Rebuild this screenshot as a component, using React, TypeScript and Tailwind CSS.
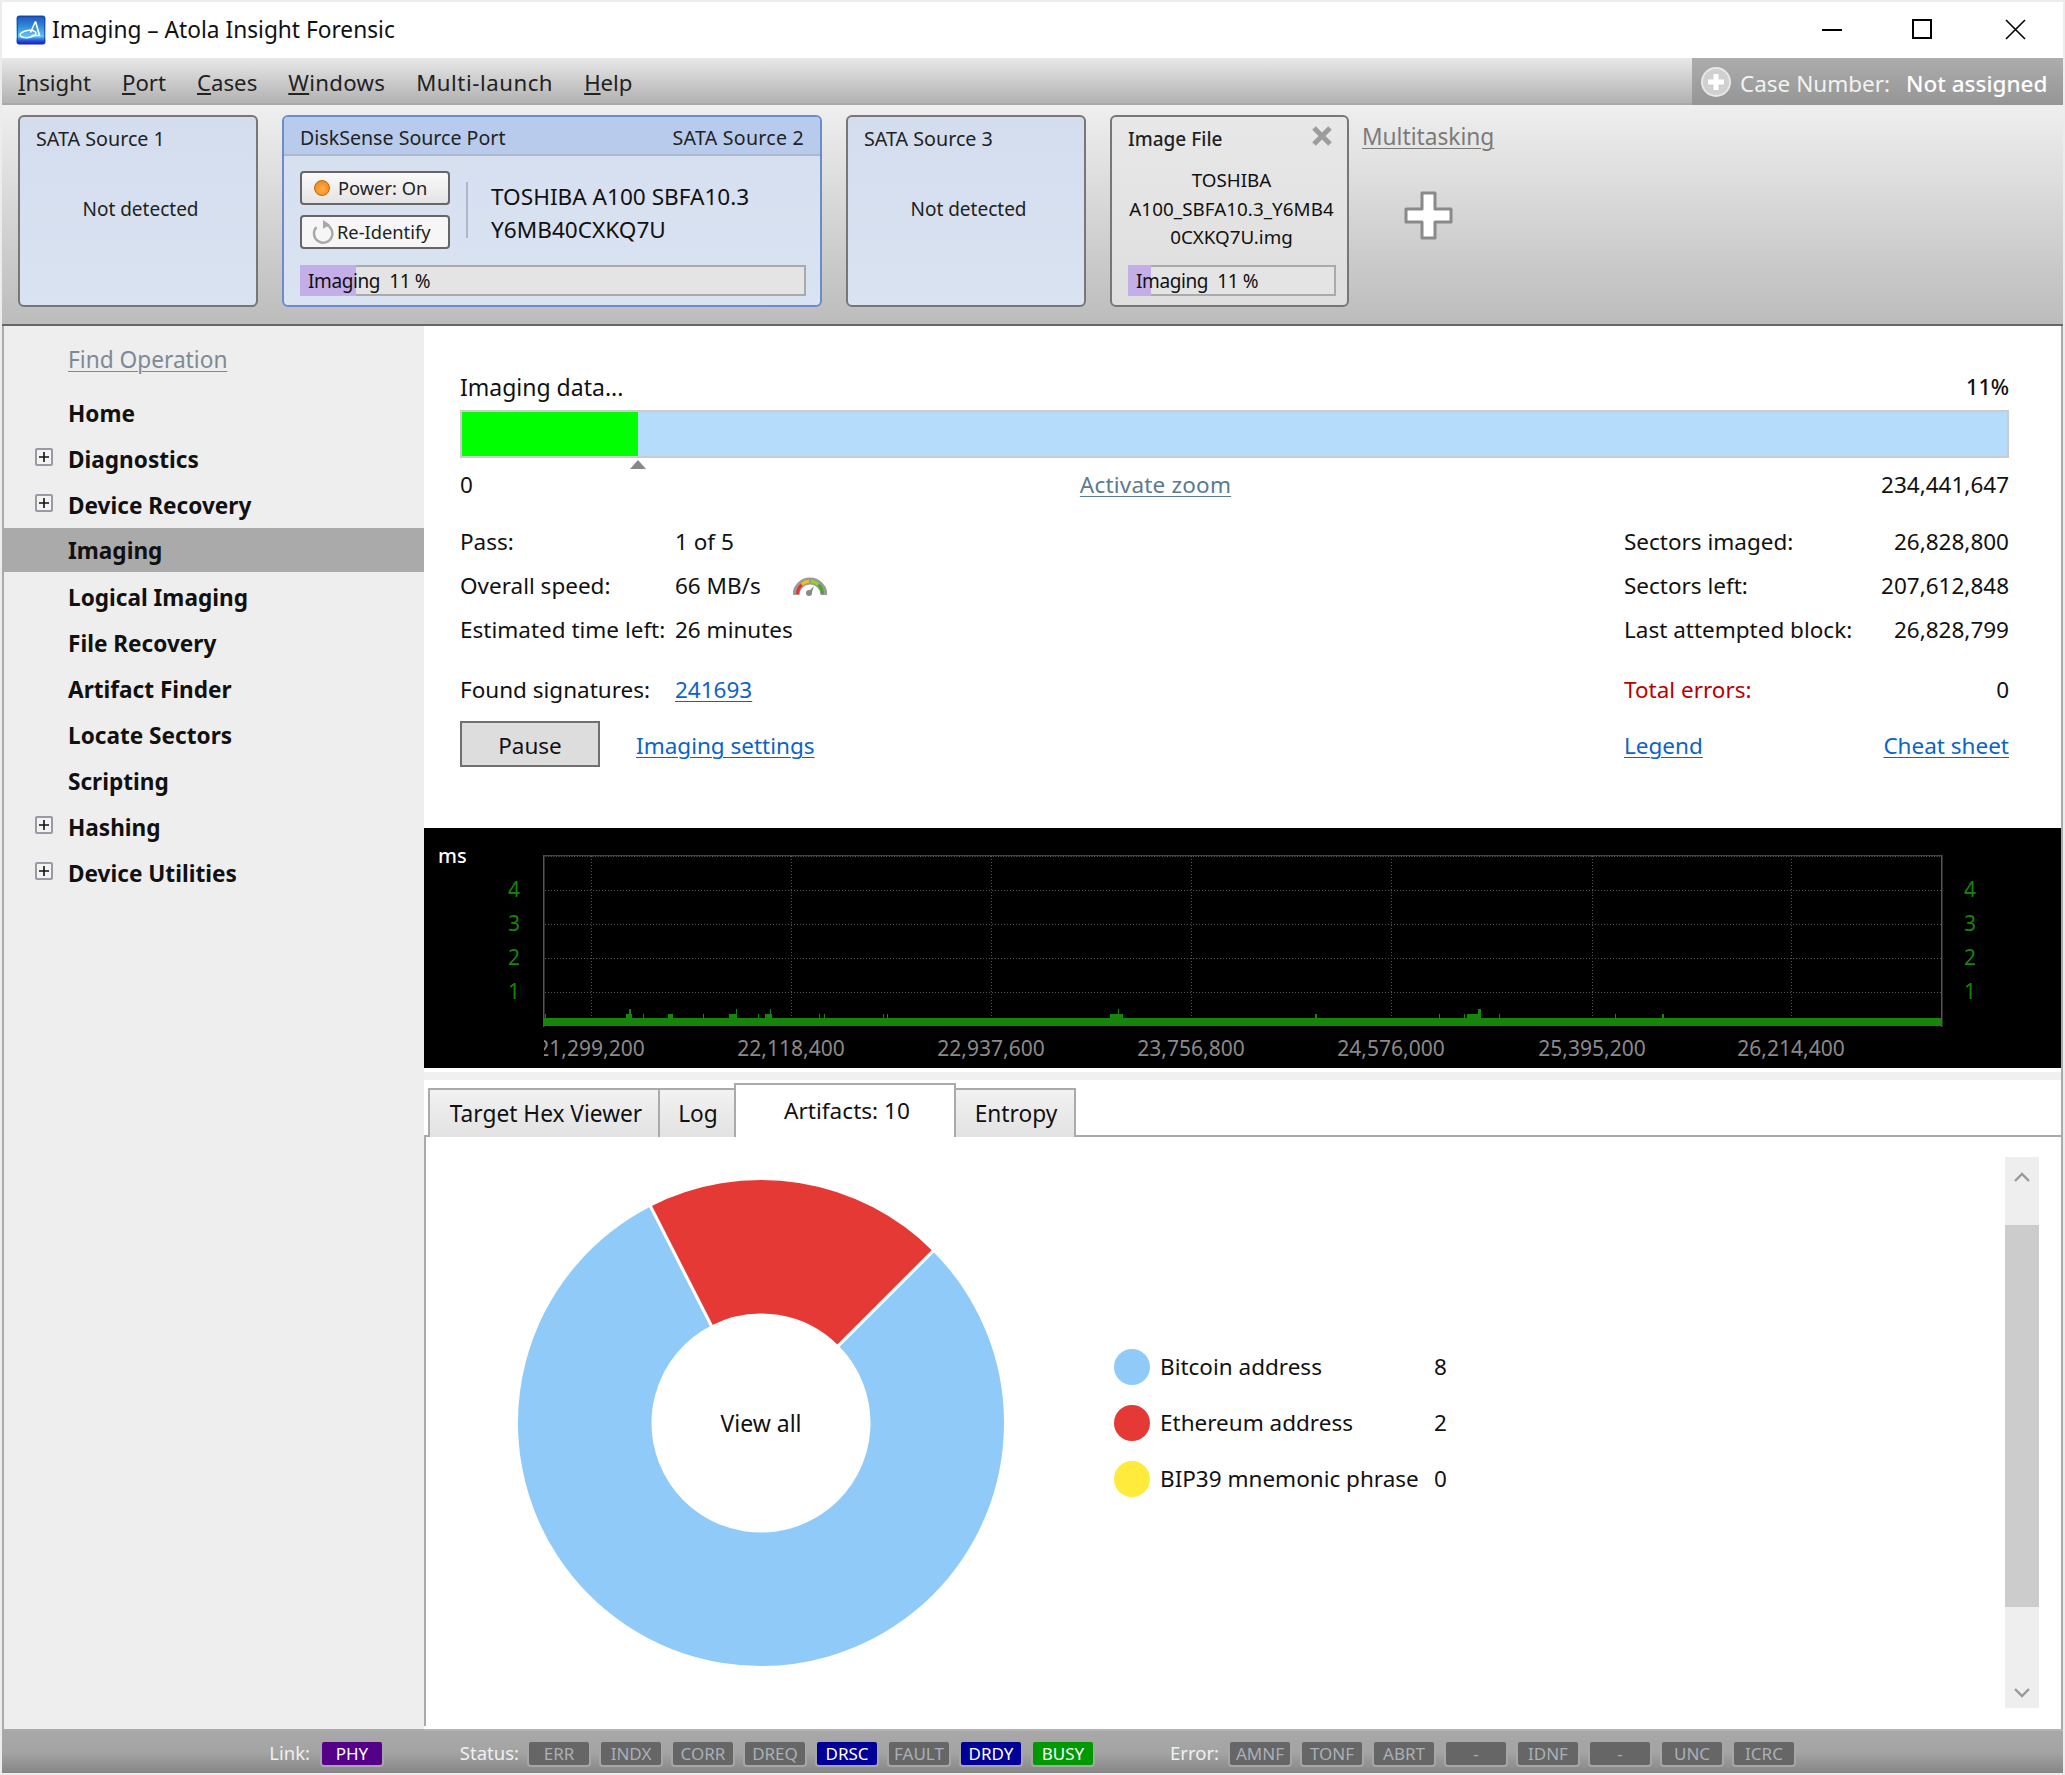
import React from "react";

const Plus = () => (
  <span className="w-[18px] h-[18px] shrink-0 rounded-[2px] border-2 border-[#9a9aa6] bg-[#f4f4f4] flex items-center justify-center">
    <svg width="10" height="10" viewBox="0 0 10 10"><path d="M5 0v10M0 5h10" stroke="#111" strokeWidth="1.6" /></svg>
  </span>
);

const Logo = () => (
  <svg width="30" height="30" viewBox="0 0 30 30" className="shrink-0">
    <defs>
      <linearGradient id="lg" x1="0" y1="0" x2="0" y2="1">
        <stop offset="0" stopColor="#1a55b8" />
        <stop offset="0.35" stopColor="#2f86d8" />
        <stop offset="0.72" stopColor="#5cc4f4" />
        <stop offset="0.85" stopColor="#2b5fe0" />
        <stop offset="1" stopColor="#1212b4" />
      </linearGradient>
    </defs>
    <rect x="0.5" y="0.5" width="29" height="29" rx="3" fill="url(#lg)" />
    <rect x="1.5" y="1.5" width="27" height="27" rx="2.5" fill="none" stroke="#123aa8" strokeOpacity="0.7" />
    <ellipse cx="12" cy="19" rx="8" ry="3.6" fill="none" stroke="#fff" strokeWidth="1.5" transform="rotate(-8 12 19)" />
    <path d="M19.5 6.5L14.5 17.5M19.5 6.5L23.5 20.5H15.5" fill="none" stroke="#fff" strokeWidth="1.6" />
  </svg>
);

const Progress = ({ fill, w }: { fill: number; w: string }) => (
  <div className={`relative h-[31px] ${w} border-2 border-[#aaaaaa] bg-[#e4e4e4] mt-auto`}>
    <div className="absolute -left-[2px] -top-[2px] -bottom-[2px] bg-[#c3aee8]" style={{ width: fill }} />
    <div className="relative pl-[6px] leading-[28px] text-[19px] tracking-[-0.4px] text-[#111] whitespace-pre">Imaging  11 %</div>
  </div>
);

const EmptyCard = ({ title }: { title: string }) => (
  <div className="w-[240px] h-[192px] shrink-0 rounded-[6px] border-2 border-[#777777] bg-gradient-to-b from-[#d3ddee] to-[#dae3f1] flex flex-col pl-[16px] pr-[15px] pt-[8px] text-[19px] text-[#222]">
    <div className="leading-[28px] whitespace-nowrap text-[19.7px]">{title}</div>
    <div className="mt-[42px] leading-[28px] text-center whitespace-nowrap pl-[4px]">Not detected</div>
  </div>
);

const Chip = ({ t, c }: { t: string; c?: string }) => (
  <div
    className={`w-[64px] h-[27px] rounded-[4px] border-2 border-[#a6a6a6] flex items-center justify-center text-[17px] leading-none ${
      c === "blue" ? "bg-[#000099] text-white" : c === "purple" ? "bg-[#550088] text-white" : c === "green" ? "bg-[#009900] text-white" : "bg-[#666666] text-[#aab0b6]"
    }`}
  >
    {t}
  </div>
);

const ticks: [number, string][] = [
  [167, "21,299,200"],
  [367, "22,118,400"],
  [567, "22,937,600"],
  [767, "23,756,800"],
  [967, "24,576,000"],
  [1168, "25,395,200"],
  [1367, "26,214,400"],
];

const low: [number, number][] = [
  [121, 1], [202, 6], [219, 1], [244, 5], [279, 1], [305, 8], [334, 1], [341, 7], [395, 1], [400, 1], [459, 1], [463, 1],
  [686, 13], [891, 2], [1015, 1], [1040, 1], [1043, 11], [1075, 1], [1191, 1], [1238, 2],
];
const tall: [number, number][] = [[205, 2], [312, 1], [346, 1], [694, 1], [1054, 3]];

const Chart = () => (
  <svg width="1637" height="240" viewBox="0 0 1637 240" className="block bg-black">
    <defs>
      <clipPath id="cl"><rect x="120" y="0" width="1400" height="240" /></clipPath>
    </defs>
    <text x="14" y="35" fill="#fff" fontSize="20" fontWeight="500">ms</text>
    {[62.5, 96.5, 130.5, 164.5].map((y) => (
      <line key={y} x1="121" x2="1517" y1={y} y2={y} stroke="#555" strokeDasharray="1 2" />
    ))}
    <line x1="119" x2="1518" y1="27.5" y2="27.5" stroke="#444" />
    <line x1="119" x2="1518" y1="28.5" y2="28.5" stroke="#666" strokeDasharray="1 1.6" />
    {ticks.map(([x]) => (
      <line key={x} x1={x + 0.5} x2={x + 0.5} y1="28" y2="198" stroke="#555" strokeDasharray="1 2" />
    ))}
    <rect x="119" y="27" width="1.5" height="172" fill="#555" />
    <rect x="1517" y="27" width="1.5" height="172" fill="#555" />
    <rect x="120" y="190" width="1398" height="8" fill="#17850b" />
    {low.map(([x, w]) => (
      <rect key={x} x={x} y="186" width={w} height="4" fill="#17850b" />
    ))}
    {tall.map(([x, w]) => (
      <rect key={x} x={x} y="181" width={w} height="9" fill="#17850b" />
    ))}
    {[["4", 69], ["3", 103], ["2", 137], ["1", 171]].map(([t, y]) => (
      <React.Fragment key={t as string}>
        <text x="90" y={y as number} textAnchor="middle" fill="#17850b" fontSize="21">{t}</text>
        <text x="1546" y={y as number} textAnchor="middle" fill="#17850b" fontSize="21">{t}</text>
      </React.Fragment>
    ))}
    <g clipPath="url(#cl)">
      {ticks.map(([x, t]) => (
        <text key={t} x={x} y="228" textAnchor="middle" fill="#8a8a8a" fontSize="21">{t}</text>
      ))}
    </g>
  </svg>
);

const pt = (r: number, deg: number) => {
  const a = ((deg - 90) * Math.PI) / 180;
  return `${250 + r * Math.cos(a)} ${250 + r * Math.sin(a)}`;
};
const seg = (a: number, b: number) => {
  const large = b - a > 180 ? 1 : 0;
  return `M${pt(244.5, a)} A244.5 244.5 0 ${large} 1 ${pt(244.5, b)} L${pt(108, b)} A108 108 0 ${large} 0 ${pt(108, a)} Z`;
};

const Pie = () => (
  <svg width="500" height="500" viewBox="0 0 500 500" className="shrink-0">
    <path d={seg(45, 333)} fill="#90caf9" stroke="#fff" strokeWidth="3" />
    <path d={seg(-27, 45)} fill="#e53935" stroke="#fff" strokeWidth="3" />
    <text x="250" y="259" textAnchor="middle" fontSize="23" fill="#111">View all</text>
  </svg>
);

const Stat = ({ l, v }: { l: string; v: string }) => (
  <div className="h-[44px] flex items-center justify-between">
    <span>{l}</span>
    <span>{v}</span>
  </div>
);

const tabCls = "h-[49px] flex items-center justify-center border-2 border-[#aaaaaa] border-b-0 bg-gradient-to-b from-[#f2f2f2] to-[#e2e2e2] text-[22.7px] text-[#111] whitespace-nowrap pt-[2px]";

export default function App() {
  return (
    <div className="w-[2065px] h-[1775px] bg-[#ececec] p-[2px] overflow-hidden text-[22.5px] text-[#111] font-['Noto_Sans','Open_Sans',sans-serif]">
      <div className="w-[2061px] h-[1771px] flex flex-col bg-white">
        {/* Title bar */}
        <div className="h-[56px] shrink-0 bg-white flex items-center pl-[14px]">
          <Logo />
          <span className="ml-[6px] text-[22.7px] whitespace-nowrap">Imaging – Atola Insight Forensic</span>
          <svg width="224" height="24" viewBox="0 0 224 24" className="ml-auto mr-[36px] -mt-[2px]" fill="none" stroke="#000">
            <path d="M19 13h20" strokeWidth="2" />
            <rect x="110" y="3" width="18" height="18" strokeWidth="2" />
            <path d="M203 3l19 19M222 3l-19 19" strokeWidth="1.6" />
          </svg>
        </div>
        {/* Menu */}
        <div className="h-[47px] shrink-0 flex bg-gradient-to-b from-[#e8e8e8] to-[#b2b2b2] border-b-2 border-[#a8a8a8]">
          <div className="flex items-center gap-[31px] pl-[16px] pt-[5px] text-[22.2px] text-[#222]">
            <span><u>I</u>nsight</span>
            <span><u>P</u>ort</span>
            <span><u>C</u>ases</span>
            <span className="tracking-[0.3px]"><u>W</u>indows</span>
            <span className="tracking-[0.55px]">Multi-launch</span>
            <span><u>H</u>elp</span>
          </div>
          <div className="ml-auto w-[371px] -mb-[2px] bg-gradient-to-b from-[#adadad] to-[#959595] flex items-center pl-[9px] text-[22.5px] text-[#f2f2f2] whitespace-nowrap">
            <svg width="30" height="30" viewBox="0 0 30 30" className="shrink-0">
              <circle cx="15" cy="15" r="14" fill="#d0d0d0" stroke="#e8e8e8" strokeWidth="2" />
              <path d="M15 7v16M7 15h16" stroke="#fff" strokeWidth="5" />
            </svg>
            <span className="ml-[9px] pt-[4px]">Case Number:</span>
            <span className="ml-[16px] pt-[4px] text-white font-medium">Not assigned</span>
          </div>
        </div>
        {/* Toolbar */}
        <div className="h-[221px] shrink-0 flex items-start pl-[16px] pt-[10px] gap-[24px] bg-gradient-to-b from-[#efefef] to-[#bcbcbc] border-b-2 border-[#666666]">
          <EmptyCard title="SATA Source 1" />
          <div className="w-[540px] h-[192px] shrink-0 rounded-[6px] border-2 border-[#6a8ccc] bg-gradient-to-b from-[#d5dfef] to-[#dae3f2] flex flex-col text-[#222] overflow-hidden">
            <div className="h-[39px] shrink-0 bg-[#b8cbed] border-b-2 border-[#adb9cf] flex items-center justify-between pl-[16px] pr-[16px] text-[19.6px] pt-[4px]">
              <span>DiskSense Source Port</span>
              <span className="tracking-[0.25px]">SATA Source 2</span>
            </div>
            <div className="flex flex-1 flex-col pl-[16px] pr-[13px] pt-[15px] pb-[9px]">
              <div className="flex">
                <div className="flex flex-col gap-[10px] text-[18.3px] text-[#222]">
                  <div className="w-[150px] h-[34px] rounded-[4px] border-2 border-[#666] bg-gradient-to-b from-[#fafafa] to-[#e4e4e4] flex items-center pl-[12px]">
                    <span className="w-[16px] h-[16px] rounded-full border border-[#c06a00] bg-[radial-gradient(circle_at_50%_60%,#ffb050,#f07a10)]" />
                    <span className="ml-[8px]">Power: On</span>
                  </div>
                  <div className="w-[150px] h-[34px] rounded-[4px] border-2 border-[#666] bg-[#f6f6f6] flex items-center pl-[9px]">
                    <svg width="24" height="26" viewBox="0 0 22 24" fill="none" className="shrink-0">
                      <path d="M13.5 5.2A8.5 8.5 0 1 1 5 7.5" stroke="#a8a8a8" strokeWidth="2.2" />
                      <path d="M11 1l6.5 4.2L11 9z" fill="#a8a8a8" />
                    </svg>
                    <span className="ml-[2px]">Re-Identify</span>
                  </div>
                </div>
                <div className="ml-[16px] mt-[11px] w-[2px] h-[56px] bg-[#aeb8cc]" />
                <div className="ml-[23px] mt-[10px] text-[22.6px] leading-[32.5px] text-[#111]">
                  <div>TOSHIBA A100 SBFA10.3</div>
                  <div>Y6MB40CXKQ7U</div>
                </div>
              </div>
              <Progress fill={56} w="w-[506px]" />
            </div>
          </div>
          <EmptyCard title="SATA Source 3" />
          <div className="w-[239px] h-[192px] shrink-0 rounded-[6px] border-2 border-[#777777] bg-gradient-to-b from-[#e8e8e8] to-[#dedede] flex flex-col pl-[16px] pr-[15px] pt-[8px] pb-[9px] text-[#222] relative">
            <div className="leading-[28px] text-[19px] font-medium">Image File</div>
            <svg width="22" height="20" viewBox="0 0 22 20" className="absolute right-[14px] top-[9px]">
              <path d="M3 2l16 16M19 2L3 18" stroke="#9c9c9c" strokeWidth="5" />
            </svg>
            <div className="mt-[13px] text-center text-[18.8px] leading-[28.5px] -ml-[10px] -mr-[13px] text-[#111]">
              <div>TOSHIBA</div>
              <div className="tracking-[0.05px] whitespace-nowrap">A100_SBFA10.3_Y6MB4</div>
              <div>0CXKQ7U.img</div>
            </div>
            <Progress fill={23} w="w-[208px]" />
          </div>
          <div className="-ml-[11px] flex flex-col items-start">
            <span className="text-[22.7px] leading-[32px] underline decoration-1 underline-offset-[3px] text-[#7a7a7a] mt-[6px]">Multitasking</span>
            <svg width="50" height="50" viewBox="0 0 50 50" className="ml-[42px] mt-[38px]">
              <path d="M18 2h13v16h16v13H31v16H18V31H2V18h16z" fill="#fff" stroke="#8a8a8a" strokeWidth="3" strokeLinejoin="round" />
            </svg>
          </div>
        </div>
        {/* Body */}
        <div className="flex h-[1403px] shrink-0">
          <aside className="w-[422px] shrink-0 bg-[#eeeeee] border-l-2 border-b-2 border-[#aaaaaa] flex flex-col -mb-[2px] relative z-10">
            <div className="h-[46px] mt-[11px] flex items-center pl-[64px] text-[#7d8a96] underline decoration-1 underline-offset-[3px] text-[22.7px]">Find Operation</div>
            <div className="mt-[8px] flex flex-col font-bold text-[22.6px] text-[#111]">
              {[
                ["Home", 0], ["Diagnostics", 1], ["Device Recovery", 1], ["Imaging", 2], ["Logical Imaging", 0], ["File Recovery", 0],
                ["Artifact Finder", 0], ["Locate Sectors", 0], ["Scripting", 0], ["Hashing", 1], ["Device Utilities", 1],
              ].map(([t, k]) => (
                <div key={t as string} className={`relative flex items-center pl-[64px] ${k === 2 ? "h-[44px] -mt-[1px] mb-[3px] pt-[2px] bg-[#aaaaaa]" : "h-[46px]"}`}>
                  {k === 1 && (
                    <span className="absolute left-[31px] top-[11px]"><Plus /></span>
                  )}
                  {t}
                </div>
              ))}
            </div>
          </aside>
          <main className="w-[1639px] shrink-0 border-r-2 border-[#aaaaaa] flex flex-col bg-white">
            <section className="h-[502px] shrink-0 pl-[36px] pr-[52px] pt-[45px]">
              <div className="h-[32px] flex items-center justify-between">
                <span className="text-[23px]">Imaging data...</span>
                <span className="font-medium text-[21.5px]">11%</span>
              </div>
              <div className="mt-[7px] h-[48px] flex border-2 border-[#cccccc] bg-[#b6dcfb]">
                <div className="w-[176px] bg-[#00ff00]" />
              </div>
              <div className="relative h-[54px] flex items-center justify-between">
                <svg width="16" height="9" viewBox="0 0 16 9" className="absolute left-[170px] top-[2px]"><path d="M8 0l8 9H0z" fill="#888" /></svg>
                <span>0</span>
                <span className="text-[#5a7a90] underline decoration-1 underline-offset-[3px] mr-[43px] tracking-[0.2px]">Activate zoom</span>
                <span>234,441,647</span>
              </div>
              <div className="mt-[8px] flex justify-between">
                <div className="w-[640px]">
                  <div className="h-[44px] flex items-center"><span className="w-[215px]">Pass:</span><span>1 of 5</span></div>
                  <div className="h-[44px] flex items-center">
                    <span className="w-[215px]">Overall speed:</span><span>66 MB/s</span>
                    <svg width="34" height="20" viewBox="0 0 34 20" className="ml-[32px]" fill="none">
                      <path d="M3 19a14 14 0 0 1 28 0" stroke="#9a9a9a" strokeWidth="7" />
                      <path d="M4.5 18a12.5 12.5 0 0 1 4-9.2" stroke="#e8322a" strokeWidth="3" />
                      <path d="M9 8.3a12.5 12.5 0 0 1 7-3" stroke="#f2c21a" strokeWidth="3" />
                      <path d="M18 5.3a12.5 12.5 0 0 1 7 3" stroke="#9ad21e" strokeWidth="3" />
                      <path d="M25.5 8.8a12.5 12.5 0 0 1 4 9.2" stroke="#3cb01e" strokeWidth="3" />
                      <path d="M21 10l-3 9-4-2z" fill="#8a8a8a" />
                      <circle cx="16" cy="17" r="3" fill="#8a8a8a" />
                    </svg>
                  </div>
                  <div className="h-[44px] flex items-center"><span className="w-[215px] whitespace-nowrap">Estimated time left:</span><span>26 minutes</span></div>
                  <div className="h-[44px] mt-[16px] flex items-center"><span className="w-[215px]">Found signatures:</span><span className="text-[#0a64c8] underline decoration-1 underline-offset-[3px]">241693</span></div>
                </div>
                <div className="w-[385px]">
                  <Stat l="Sectors imaged:" v="26,828,800" />
                  <Stat l="Sectors left:" v="207,612,848" />
                  <Stat l="Last attempted block:" v="26,828,799" />
                  <div className="h-[44px] mt-[16px] flex items-center justify-between"><span className="text-[#b80000]">Total errors:</span><span>0</span></div>
                </div>
              </div>
              <div className="mt-[9px] flex items-center">
                <div className="w-[140px] h-[46px] border-2 border-[#707070] bg-[#dddddd] flex items-center justify-center pt-[3px]">Pause</div>
                <span className="ml-[36px] pt-[3px] text-[#0a64c8] underline decoration-1 underline-offset-[3px]">Imaging settings</span>
                <span className="ml-auto pt-[3px] w-[385px] flex justify-between text-[#0a64c8] underline decoration-1 underline-offset-[3px]">
                  <span>Legend</span>
                  <span>Cheat sheet</span>
                </span>
              </div>
            </section>
            <Chart />
            <div className="h-[4px] shrink-0 bg-white" />
            <div className="h-[8px] shrink-0 bg-[#f0f0f0]" />
            {/* Tabs */}
            <div className="h-[57px] shrink-0 pl-[4px] flex items-end relative z-10 -mb-[2px]">
              <div className={`${tabCls} w-[232px] pl-[4px]`}>Target Hex Viewer</div>
              <div className={`${tabCls} w-[78px] -ml-[2px] pl-[2px]`}>Log</div>
              <div className="w-[222px] -ml-[2px] h-[54px] pl-[4px] flex items-center justify-center border-2 border-b-0 border-[#aaaaaa] bg-white text-[22.6px] text-[#111] whitespace-nowrap">Artifacts: 10</div>
              <div className={`${tabCls} w-[122px] -ml-[2px] pl-[2px]`}>Entropy</div>
            </div>
            {/* Panel */}
            <div className="h-[591px] shrink-0 border-l-2 border-t-2 border-[#aaaaaa] flex items-start">
              <div className="flex items-center pl-[85px] pt-[36px]">
                <Pie />
                <div className="ml-[103px] flex flex-col gap-[20px]">
                  {[
                    ["Bitcoin address", "8", "bg-[#90caf9]"],
                    ["Ethereum address", "2", "bg-[#e53935]"],
                    ["BIP39 mnemonic phrase", "0", "bg-[#ffeb3b]"],
                  ].map(([t, n, c]) => (
                    <div key={t} className="h-[36px] flex items-center">
                      <span className={`w-[36px] h-[36px] rounded-full ${c}`} />
                      <span className="ml-[10px] w-[274px] whitespace-nowrap">{t}</span>
                      <span>{n}</span>
                    </div>
                  ))}
                </div>
              </div>
              <div className="ml-auto mr-[22px] mt-[20px] w-[34px] h-[551px] bg-[#eeeeee] flex flex-col">
                <div className="h-[68px] shrink-0 flex items-center justify-center pb-[28px]">
                  <svg width="16" height="10" viewBox="0 0 16 10" fill="none"><path d="M1 9l7-7 7 7" stroke="#999" strokeWidth="2.4" /></svg>
                </div>
                <div className="h-[382px] shrink-0 bg-[#cccccc]" />
                <div className="flex-1 flex items-end justify-center pb-[10px]">
                  <svg width="16" height="10" viewBox="0 0 16 10" fill="none"><path d="M1 1l7 7 7-7" stroke="#999" strokeWidth="2.4" /></svg>
                </div>
              </div>
            </div>
          </main>
        </div>
        {/* Status bar */}
        <div className="h-[44px] shrink-0 flex items-center bg-gradient-to-b from-[#a8a8a8] via-[#a4a4a4] to-[#868686] border-t-2 border-[#b4b4b4] text-[18.5px] text-[#f0f0f0] pt-[2px]">
          <div className="w-[308px] text-right">Link:</div>
          <div className="ml-[10px]"><Chip t="PHY" c="purple" /></div>
          <div className="w-[135px] text-right">Status:</div>
          <div className="ml-[8px] flex gap-[8px]">
            <Chip t="ERR" /><Chip t="INDX" /><Chip t="CORR" /><Chip t="DREQ" /><Chip t="DRSC" c="blue" /><Chip t="FAULT" /><Chip t="DRDY" c="blue" /><Chip t="BUSY" c="green" />
          </div>
          <div className="w-[124px] text-right">Error:</div>
          <div className="ml-[9px] flex gap-[8px]">
            <Chip t="AMNF" /><Chip t="TONF" /><Chip t="ABRT" /><Chip t="-" /><Chip t="IDNF" /><Chip t="-" /><Chip t="UNC" /><Chip t="ICRC" />
          </div>
        </div>
      </div>
    </div>
  );
}
